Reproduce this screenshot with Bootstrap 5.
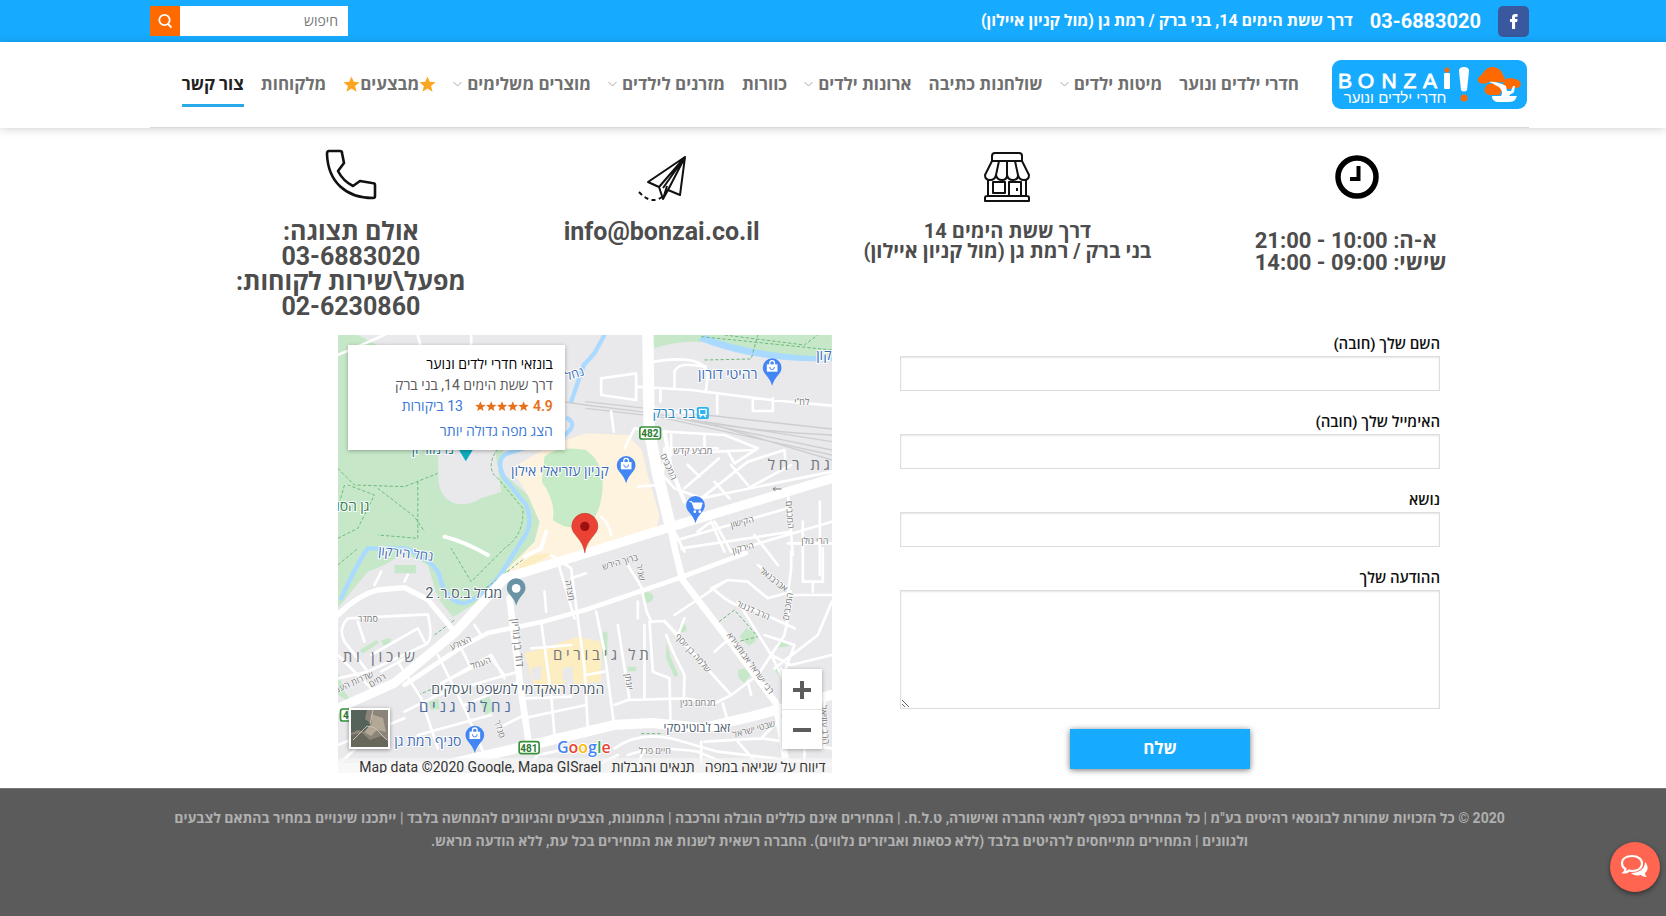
<!DOCTYPE html>
<html lang="he" dir="rtl">
<head>
<meta charset="utf-8">
<meta name="viewport" content="width=device-width, initial-scale=1">
<title>Bonzai - צור קשר</title>
<link href="https://cdn.jsdelivr.net/npm/bootstrap@5.3.0/dist/css/bootstrap.min.css" rel="stylesheet">
<style>
  :root { --brand: #16abff; --accent: #ff6a00; --ink: #4a4a4a; }
  body { font-family: Roboto, "Open Sans", "Liberation Sans", sans-serif; color: var(--ink); background: #fff; min-height: 100vh; }
  a { color: inherit; text-decoration: none; }
  .band { padding-left: 13px; }
  .shell { max-width: 1379px; margin-inline: auto; }

  .topbar { background: var(--brand); color: #fff; font-weight: 700; }
  .topbar .shell { height: 42px; }
  .top-links { gap: 17px; }
  .phone { font-size: 20px; }
  .address { font-size: 16px; }
  .fb { width: 31px; height: 31px; background: #3a589d; border-radius: 5px; }
  .search-box { width: 198px; height: 30px; }
  .search-box .form-control { border: 0; border-radius: 0; font-size: 14px; padding: 0 10px; box-shadow: none; color: #777; }
  .search-box .form-control::placeholder { color: #777; }
  .search-box .btn { width: 30px; padding: 0; border: 0; border-radius: 0; background: var(--accent); flex: none; }
  .search-box svg { display: block; margin: auto; }

  .site-head { box-shadow: 0 1px 9px rgba(0,0,0,.18); background: #fff; position: relative; }
  .site-head .shell { height: 86px; padding-right: 2px; border-bottom: 1px solid #d9d9d9; }
  .main-nav { font-size: 17px; font-weight: 700; color: #707070; gap: 17px; padding-right: 33px; white-space: nowrap; }
  .main-nav a { line-height: 24px; padding: 10px 0 8px; border-bottom: 3px solid transparent; display: flex; align-items: center; gap: 5px; }
  .main-nav a.current { color: #222; border-color: #29a9e8; }
  .main-nav a.deal { gap: 0; color: #707070; }
  .deal svg { color: #fca521; }

  .facts { display: grid; grid-template-columns: 345fr 354fr 338fr 284fr 59fr; text-align: center; height: 207px; padding-top: 21px; font-weight: 700; color: #4d4d4d; }
  .facts svg { display: block; margin: 0 auto; height: 54px; }
  .fact-md { font-size: 20px; line-height: 20px; margin-top: 18px; white-space: nowrap; }
  .fact-hours { font-size: 22px; line-height: 22px; margin-top: 27px; padding-right: 12px; display: inline-block; text-align: left; }
  .fact-lg { font-size: 25px; line-height: 25px; margin-top: 16px; white-space: nowrap; }

  .contact { display: grid; grid-template-columns: 89fr 540fr 69fr 494fr 188fr; padding-bottom: 15px; }
  .contact form { grid-column: 2; }
  .contact label { display: block; font-size: 15px; font-weight: 600; line-height: 19px; color: #111; margin-bottom: 2px; }
  .contact .form-control { border: 1px solid #ddd; border-radius: 0; box-shadow: inset 0 1px 2px rgba(0,0,0,.1); height: 35px; margin-bottom: 22px; }
  .contact textarea.form-control { height: 119px; margin-bottom: 20px; }
  .send { display: block; width: 180px; height: 40px; margin: 0 190px 0 0; border: 0; border-radius: 0; background: var(--brand); color: #fff; font-size: 17px; font-weight: 700; padding: 0; box-shadow: 0 1px 6px rgba(0,0,0,.55); }

  .map { grid-column: 4; position: relative; height: 438px; overflow: hidden; background: #e9e9ec; }
  .map-art { width: 100%; height: 100%; display: block; }
  .map-art text { direction: rtl; text-anchor: middle; }
  .place-card { position: absolute; top: 10px; left: 10px; width: 217px; height: 105px; padding: 9px 12px; background: #fff; box-shadow: 0 1px 4px rgba(0,0,0,.3); font-size: 14px; line-height: 21px; color: #5b5b5b; }
  .place-card .title { color: #000; font-weight: 500; }
  .place-card a { color: #3a78d8; }
  .place-card .score, .place-card svg { color: #e7711b; font-weight: 600; }
  .zoom-box { position: absolute; right: 10px; bottom: 24px; width: 40px; background: #fff; box-shadow: 0 1px 4px rgba(0,0,0,.3); }
  .zoom-box button { display: block; width: 40px; height: 40px; border: 0; background: none; padding: 0; }
  .zoom-box button + button { border-top: 1px solid #e6e6e6; }
  .sat { position: absolute; left: 11px; bottom: 24px; width: 41px; height: 41px; border: 2px solid #fff; padding: 0; box-shadow: 0 1px 4px rgba(0,0,0,.4); }
  .sat svg { display: block; }
  .map-credit { position: absolute; left: 0; right: 0; bottom: -3px; padding: 0 6px; font-size: 14px; line-height: 18px; color: #333; background: rgba(245,245,245,.7); gap: 10px; white-space: nowrap; }

  .site-foot { background: #5b5b5b; color: #b0b0b0; font-size: 14px; font-weight: 700; line-height: 23px; text-align: center; padding-top: 18px; padding-bottom: 63px; border-top: 1px solid #777; }
  .chat { position: fixed; right: 6px; bottom: 24px; width: 50px; height: 50px; border: 0; border-radius: 50%; background: #ff6550; padding: 0; box-shadow: 0 2px 5px rgba(0,0,0,.45); }
</style>
</head>
<body>

<div class="topbar band">
  <div class="shell d-flex align-items-center justify-content-between">
    <div class="top-links d-flex align-items-center">
      <a class="fb d-flex align-items-center justify-content-center" href="#" aria-label="Facebook">
        <svg width="12" height="16" viewBox="0 0 12 16"><path fill="#fff" d="M4 16V9H2V6h2V4.200C4 2 5.200 1 7.200 1H9.500v2.700H8C7.300 3.700 7.100 4 7.100 4.600V6h2.400L9.200 9H7.100v7z"/></svg>
      </a>
      <a class="phone" href="tel:036883020">03-6883020</a>
      <span class="address">דרך ששת הימים 14, בני ברק / רמת גן (מול קניון איילון)</span>
    </div>
    <form class="search-box d-flex" role="search">
      <input class="form-control" type="search" placeholder="חיפוש" aria-label="חיפוש">
      <button class="btn" type="button" aria-label="חפש"><svg width="16" height="16" viewBox="0 0 16 16" fill="none" stroke="#fff" stroke-width="1.800"><circle cx="7.500" cy="7" r="5.200"/><path d="M11 11l3.500 3.500"/></svg></button>
    </form>
  </div>
</div>

<header class="site-head band">
  <div class="shell d-flex align-items-center">
    <a href="#" aria-label="Bonzai" class="flex-shrink-0">
      <svg width="195" height="49" viewBox="0 0 195 49" class="d-block" direction="ltr">
        <rect width="195" height="49" rx="9" fill="#16abff"/>
        <g fill="#fff" font-family="Liberation Sans, sans-serif">
          <text y="28" font-size="21" stroke="#fff" stroke-width="0.800" text-anchor="middle"><tspan x="13">B</tspan><tspan x="34">O</tspan><tspan x="57">N</tspan><tspan x="78">Z</tspan><tspan x="98">A</tspan></text>
          <text x="63" y="43" font-size="15" direction="rtl" text-anchor="middle">חדרי ילדים ונוער</text>
        </g>
        <rect x="112" y="13" width="6" height="16" rx="1" fill="#fff"/><circle cx="115" cy="10" r="2.500" fill="#ff6a00"/>
        <path d="M127 11q0-4 5-4t5 4l-2 19q-3 3-6 0z" fill="#fff"/><circle cx="132" cy="38" r="3.500" fill="#ff6a00"/>
        <path d="M146 21c-1-4 3-5 5-8 3-5 7-6 10-6 5 0 9 4 10 8 2 2 3 6 0 7-5 1-9-1-14 0-3 2-9 3-11-1zM155 25c4-2 9-2 12 0 3 2 3 8 0 10h-9c-6 0-7-7-3-10zM172 21c2-3 7-4 10-2 6 0 8 5 6 7-1 3-7 1-10 3-4 1-9-3-6-8z" fill="#ff6a00"/>
        <path d="M157 22c5-1 9 1 13 2l4 2 1 5 4 0 2-5h2l-1 6c-2 2-4 2-5 4h8l-1 2c-1 3-4 4-7 4h-10c-4 0-7-2-7-6h9c2-3 1-6-2-9l-4-2c-2-2-4-2-6-3z" fill="#fff"/>
      </svg>
    </a>
    <nav class="main-nav d-flex">
      <a href="#">חדרי ילדים ונוער</a>
      <a href="#">מיטות ילדים <svg width="9" height="6" viewBox="0 0 9 6"><path d="M.5 1l4 4 4-4" fill="none" stroke="#aaa"/></svg></a>
      <a href="#">שולחנות כתיבה</a>
      <a href="#">ארונות ילדים <svg width="9" height="6" viewBox="0 0 9 6"><path d="M.5 1l4 4 4-4" fill="none" stroke="#aaa"/></svg></a>
      <a href="#">כוורות</a>
      <a href="#">מזרנים לילדים <svg width="9" height="6" viewBox="0 0 9 6"><path d="M.5 1l4 4 4-4" fill="none" stroke="#aaa"/></svg></a>
      <a href="#">מוצרים משלימים <svg width="9" height="6" viewBox="0 0 9 6"><path d="M.5 1l4 4 4-4" fill="none" stroke="#aaa"/></svg></a>
      <a href="#" class="deal"><svg width="17" height="17" viewBox="0 0 20 20"><path id="star" fill="currentColor" d="M10 .5l2.600 6.300 6.900.5-5.300 4.400 1.700 6.700L10 14.800l-5.900 3.600 1.700-6.700L.5 7.300l6.900-.5z"/></svg>מבצעים<svg width="17" height="17" viewBox="0 0 20 20"><use href="#star"/></svg></a>
      <a href="#">מלקוחות</a>
      <a href="#" class="current">צור קשר</a>
    </nav>
  </div>
</header>

<main class="band">
  <section class="shell facts">
    <div>
      <svg width="54" height="54" viewBox="0 0 54 54"><circle cx="27" cy="28" r="19" fill="#fff" stroke="#000" stroke-width="5.500"/><path d="M28.500 17v13H20" fill="none" stroke="#000" stroke-width="4"/></svg>
      <div class="fact-hours">א-ה: 10:00 - 21:00<br>שישי: 09:00 - 14:00</div>
    </div>
    <div>
      <svg width="54" height="54" viewBox="0 0 54 54" fill="none" stroke="#111" stroke-width="2" stroke-linejoin="round">
        <path d="M12 12V7q0-3 3-3h24q3 0 3 3v5zM12 12L5 26q0 5 5 5t6-5q1 5 6 5t5-5q1 5 6 5t5-5q1 5 6 5t5-5l-7-14M19 12l-3 14M27 12v14M35 12l3 14M8 31v16M46 31v16M13 33h12v11H13zM29 47V33h12v14M7 47h40q2 0 2 2v3H5v-3q0-2 2-2z"/><path d="M37 39v3"/>
      </svg>
      <div class="fact-md">דרך ששת הימים 14<br>בני ברק / רמת גן (מול קניון איילון)</div>
    </div>
    <div>
      <svg width="54" height="54" viewBox="0 0 54 54" fill="none" stroke="#111" stroke-width="2" stroke-linejoin="round">
        <path d="M50 8L13 33l11 5zM50 8L24 38l4 12 5-9zM50 8L33 41l12 5zM28 50L32 37M50 8L28 39"/><path stroke-dasharray="4 3.500" d="M4 43q12 13 23 5"/>
      </svg>
      <div class="fact-lg"><a href="mailto:info@bonzai.co.il">info@bonzai.co.il</a></div>
    </div>
    <div>
      <svg width="54" height="54" viewBox="0 0 54 54" fill="none" stroke="#111" stroke-width="2.600" stroke-linejoin="round">
        <path d="M5 2h11q2 0 2 2l2 10-6 8q5 10 15 15l7-5 12 2q3 0 3 2v11q0 2-2 2C22 49 4 33 3 5q0-3 2-3z"/>
      </svg>
      <div class="fact-lg">אולם תצוגה:<br>03-6883020<br>מפעל\שירות לקוחות:<br>02-6230860</div>
    </div>
  </section>

  <section class="shell contact">
    <form>
      <label for="f-name">השם שלך (חובה)</label>
      <input class="form-control" id="f-name" type="text">
      <label for="f-mail">האימייל שלך (חובה)</label>
      <input class="form-control" id="f-mail" type="email">
      <label for="f-subj">נושא</label>
      <input class="form-control" id="f-subj" type="text">
      <label for="f-msg">ההודעה שלך</label>
      <textarea class="form-control" id="f-msg"></textarea>
      <button class="btn send" type="button">שלח</button>
    </form>

    <div class="map">
      <svg class="map-art" viewBox="0 0 494 438" preserveAspectRatio="xMidYMid slice" role="img" aria-label="מפה">
        <g transform="scale(.333333)" fill="none" stroke-linecap="round" stroke-linejoin="round">
          <rect width="1490" height="1320" fill="#e9e9ec"/>
          <!-- parks -->
          <path fill="#c6e8c8" d="M0 0H60L120 30 500 340 480 400 570 480 610 570 580 650 520 700 470 770 345 846 300 790 270 690 200 655 140 690 90 710 40 770 0 820z"/>
          <path fill="#e9e9ec" d="M300 330H470L490 470 430 490Q390 515 350 505 310 490 302 440zM40 800L110 720 200 680 270 700 300 790 340 850 200 800z"/>
          <path fill="#c6e8c8" d="M945 0H1482V75Q1330 80 1200 40 1060 0 950 40zM170 690h65v25h-65zM0 1010l20 60 30 40-50-30z"/>
          <path fill="#aadaff" stroke="none" d="M1100 0Q1250 60 1482 65V78Q1250 85 1080 15z"/>
          <g fill="#c6e8c8">
            <circle cx="930" cy="787" r="16"/><circle cx="1034" cy="880" r="12"/><path d="M795 890h14v70l-8 30-8-30zM985 920l15 50 22 50-12 6-25-56zM1205 905l20-25 28 15v25l-20 12zM1200 1005l20-5 18 20-18 24-18-15zM1315 925l20-10 20 18-38 6zM1315 990l20 15v30l-22-26zM66 945l50-30 8 8-50 34zM130 915l28-6v15l-22 8zM425 1095l30-10 12 40-24 14zM272 1100l30-8 4 30-26 3zM870 995h25v14h-25z"/>
          </g>
          <!-- commercial blocks -->
          <path fill="#fdf3de" d="M520 400L640 330 744 295 870 300 912 345 932 430 965 540 958 575 740 650 545 725 505 705 590 620 605 560 570 480z"/>
          <path fill="#c6ebc6" d="M620 365Q660 330 744 345 795 380 795 450 790 540 750 570 690 590 645 555 655 500 612 440z"/>
          <path fill="#fdeec2" d="M560 955l70-20 90-30 70 15v120l-80 8-10-40-40 70-70-20zM545 690l40-30 60-6-100 60z"/>
          <path fill="#e9e9ec" d="M580 1000l30-8v40l-25 4zM675 1000l30-6v40l-30 4z"/>
          <!-- water -->
          <path stroke="#aadaff" stroke-width="13" d="M800 0L770 55 738 90 700 200M690 250Q720 270 680 300L510 355Q470 370 500 430L565 510Q590 570 550 620L500 700Q450 780 380 805 320 800 305 720 280 670 200 640L90 640Q60 680 10 790"/>
          <!-- trails -->
          <g stroke="#6dba7c" stroke-width="3" stroke-dasharray="10 6" stroke-linecap="butt">
            <path d="M0 400L50 450 200 455 300 415M240 440V610L120 600M120 460L230 545 260 590M0 610L60 580 110 480 30 450M20 450L0 520M480 340Q440 400 480 430L555 520Q560 600 500 640L400 740 340 640M0 690L60 640M580 655L430 770M1100 75L1240 72 1260 0M1090 5L1482 45M1160 0L1400 30 1440 0M1144 860L1190 825 1260 905 1200 920M910 1196h65M240 1080l60-25M290 900l60-45"/>
          </g>
          <!-- railway -->
          <g stroke="#cdced0" stroke-width="4">
            <path d="M540 180L744 210 950 235 1482 345M744 220L960 245 1482 360M1060 255Q1250 290 1482 300M1100 260L1482 320M744 200L1482 282M1130 270L1482 375"/>
          </g>
          <!-- side streets -->
          <g stroke="#fff" stroke-width="8">
            <path d="M790 130L895 115V195L790 180zM895 155L1060 165 1300 195 1482 212M950 80Q1100 55 1110 120L1104 170M1010 160V110Q1020 85 1060 90L1104 95M1138 175V235M968 165V200M1245 190V228H1305V190M0 60L140 0M240 0L260 80M400 0V60M820 230L828 290M945 220Q1050 240 1104 228"/>
            <path d="M980 290L1160 300 1260 340 1190 385 1170 350M1000 340L1140 340M1100 300V340M1000 300V360M1010 355L1250 345M1180 390L1230 450M1040 460L1144 370M1090 490L1230 380 1340 345 1342 370M1050 390L1085 425M1130 440L1175 490M1230 460L1360 390M980 340L975 420 1010 460 1090 490 1482 410M860 340L890 280 940 290M900 455L960 450 M790 545Q815 570 820 600"/>
            <path d="M1000 620L1350 520M1030 640L1360 590M1080 590L1120 560 1160 650M1130 560L1180 650 1482 560M1350 470L1365 660M1395 560V654M1446 500V720M1350 625H1482M1250 600L1320 690M1000 570L1040 650"/>
            <path d="M1120 760L1170 735 1230 740 1290 790 1360 770M1130 765Q1190 820 1240 820L1370 880M1360 650V700L1350 780 1482 780M1395 650V740H1455V640M1425 740V770M1260 690L1350 760M1160 740L1010 840M1200 800L1300 960 1360 990 1482 960M1482 800L1440 900 1310 1000M1180 1080L1260 1020 1340 900 1360 800M980 860L1180 1080M870 690L910 755 925 825 940 860 980 858 1020 900 1040 850M900 800V850M1280 900L1370 930 1340 1010M1300 960L1340 1040M1130 950L1170 915M1230 1040L1240 1080"/>
            <path d="M920 870V1090M935 860L945 1010 995 1030 998 1160M985 900L1010 960 1040 1020 1038 1085M840 870L875 1095M830 1110L870 1095 1040 1090 1130 1105 1180 1080M1155 1105L1170 1160M775 830L800 950 830 1180M744 1020L800 1010M640 660L700 700 740 1000 750 1180M620 770L625 830M660 680L710 850M700 730L744 715"/>
            <path d="M610 860L640 1080 650 1200M580 940L700 930M560 1090L700 1085M555 1150L744 1110M30 850L270 838M30 850Q0 880 20 920L90 1010M60 860L80 920M270 838Q290 920 260 930L90 1010 0 1030M100 960L240 880 260 920M130 1010L220 960M0 960L100 1060M180 980L250 1090 300 1240M300 960L380 1120 440 1260M370 940L400 1000 310 1045M310 1045L460 960 500 1030M400 1000L460 970 500 1020M410 870L430 900M200 1130L300 1080 540 1010M0 1230L200 1150M240 1200L460 1140 M0 1290L120 1180M110 750L130 710M200 740L210 720M380 1110L545 1040M480 1180L560 1140M160 1050L230 1000"/>
            <path d="M830 1240Q900 1190 1000 1210L1140 1250 1482 1290M870 1260Q950 1230 1080 1250L1200 1300M1090 1220V1280M1100 1220L1270 1210 1320 1160M1200 1220L1280 1310M1270 1210L1482 1240M920 1240L890 1314M760 1300L840 1260M560 1314L600 1260 744 1230M1400 1080V1290M1460 1100V1230M1340 1060L1330 1000"/>
          </g>
          <!-- avenues -->
          <g stroke="#fff">
            <path stroke-width="34" d="M930 -10L934 285 959 415 994 560"/>
            <path stroke-width="20" d="M994 560L1014 654 1034 734 1164 904 1314 1104 1350 1314"/>
            <path stroke-width="28" d="M1500 425L1000 575 744 655 500 730 350 894 170 1044 -10 1125"/>
            <path stroke-width="14" d="M1224 654L1024 729 744 824 620 859 450 894 380 930 200 1050"/>
            <path stroke-width="16" d="M0 840Q60 780 120 765L200 758 270 794 350 890"/>
            <path stroke-width="20" d="M515 790L545 1034 575 1240"/>
            <path stroke-width="30" d="M-10 1300L300 1295 600 1225 834 1169 944 1164 1094 1179 1244 1144 1500 1075"/>
            <path stroke-width="12" d="M1040 500L1000 400 980 290M320 605Q380 620 450 660M625 590L610 640 560 665"/>
          </g>
          <!-- route shields -->
          <g fill="#fff" stroke="#36933a" stroke-width="5"><rect x="906" y="276" width="62" height="36" rx="7"/><rect x="544" y="1220" width="60" height="36" rx="7"/><rect x="8" y="1122" width="62" height="36" rx="7"/></g>
          <rect x="1077" y="216" width="36" height="36" rx="5" fill="#2db5f0"/><path stroke="#fff" stroke-width="4" d="M1085 223h20v16h-20zM1087 245l4-4M1103 245l-4-4"/>
          <!-- pins -->
          <path fill="#0dadbd" d="M362 343h44l-22 36z"/>
          <defs><path id="pin" d="M0 40C-8 10-28 6-28-14a28 28 0 0156 0C28 6 8 10 0 40z"/></defs>
          <g fill="#4285f4"><use href="#pin" x="1303" y="112"/><use href="#pin" x="865" y="405"/><use href="#pin" x="1073" y="525"/><use href="#pin" x="411" y="1214"/></g>
          <use href="#pin" x="535" y="772" fill="#6b93a6"/><circle cx="535" cy="760" r="13" fill="#fff"/>
          <g fill="#fff"><path id="bag" d="M1287 88h32v22h-32z"/><use href="#bag" x="-438" y="293"/><use href="#bag" x="-892" y="1102"/></g>
          <g stroke="#fff" stroke-width="4"><path id="grip" d="M1296 88v-4a7 7 0 0114 0v4"/><use href="#grip" x="-438" y="293"/><use href="#grip" x="-892" y="1102"/></g>
          <g stroke="#4285f4" stroke-width="3"><path id="smile" d="M1296 97a7 7 0 0014 0"/><use href="#smile" x="-438" y="293"/><use href="#smile" x="-892" y="1102"/></g>
          <path fill="#fff" stroke="#fff" stroke-width="3" d="M1056 500h6l8 22h18l5-18h-28"/><g fill="#fff"><circle cx="1071" cy="530" r="4"/><circle cx="1086" cy="530" r="4"/></g>
          <path fill="#ea4335" stroke="#c5352b" stroke-width="2" d="M741 652C735 610 702 600 702 574a39 39 0 0178 0C780 600 747 610 741 652z"/><circle cx="741" cy="574" r="14" fill="#9c1010"/>
          <path stroke="#777" stroke-width="3" d="M1330 462h-24l6-5m-6 5l6 5"/>
        </g>
        <g font-size="14" fill="#3d6cb5" stroke="#fff" stroke-width="2" paint-order="stroke">
          <text x="390" y="44">רהיטי דורון</text><text x="222" y="141">קניון עזריאלי אילון</text><text x="336" y="83" fill="#2a87c5">בני ברק</text><text x="90" y="411">סניף רמת גן</text><text x="486" y="25">קון</text>
          <text x="95" y="119" fill="#1d7d8c">נו מוריון</text>
          <g fill="#4a5a6b"><text x="126" y="263">מגדל ב.ס.ר. 2</text><text x="180" y="359">המרכז האקדמי למשפט ועסקים</text><text x="359" y="397" font-size="12">זאב ז'בוטינסקי</text></g>
          <text x="15" y="176" fill="#2e7d4c">גן הסו</text>
          <text x="237" y="43" font-size="12" transform="rotate(-18 237 39)">נחל</text><text x="68" y="223" font-size="13" transform="rotate(6 68 219)">נחל הירקון</text>
        </g>
        <g font-size="15" fill="#71767c"><text x="461" y="135">ג ת&#160;&#160;&#160;ר ח ל</text><text x="263" y="325">ת ל&#160;&#160;&#160;ג י ב ו ר י ם</text><text x="127" y="377" fill="#4d6b9c">נ ח ל ת&#160;&#160;&#160;ג נ י ם</text><text x="41" y="327">ש י כ ו ן&#160;&#160;&#160;ו ת</text></g>
        <g font-size="9" fill="#777" stroke="#fff" stroke-width="1" paint-order="stroke">
          <text x="464" y="70">לח"י</text><text x="355" y="119">מבצע קדש</text><text transform="translate(328 133) rotate(65)">המכבים</text>
          <text transform="translate(405 190) rotate(-14)">הקישון</text><text transform="translate(406 216) rotate(-14)">הירקון</text><text x="477" y="209">הרי גולן</text><text transform="translate(449 180) rotate(86)">המכבים</text>
          <text transform="translate(283 230) rotate(-16)">ברוך הירש</text><text transform="translate(300 238) rotate(78)">שניר</text><text transform="translate(434 247) rotate(38)">אברבנאל</text><text transform="translate(414 278) rotate(24)">הרב דנגור</text><text transform="translate(453 272) rotate(-80)">המכבים</text>
          <text transform="translate(353 320) rotate(48)">שלמה בן יוסף</text><text transform="translate(410 330) rotate(54)">רבי ישראל אבוחצירא</text><text x="360" y="371">מנחם בגין</text><text transform="translate(417 397) rotate(-16)">שבטי ישראל</text><text x="317" y="419">חיים פרל</text>
          <text transform="translate(288 347) rotate(82)">יונתן</text><text transform="translate(229 256) rotate(78)">מצדה</text><text transform="translate(176 308) rotate(84)" font-size="11">דוד בן גוריון</text><text x="30" y="287">סמדר</text><text transform="translate(124 311) rotate(-25)">הצולע</text><text transform="translate(144 331) rotate(-20)">העמל</text><text transform="translate(17 350) rotate(-24)">שדרות העם</text><text transform="translate(41 348) rotate(-30)">רמים</text><text transform="translate(159 395) rotate(72)">סנדר</text><text transform="translate(484 390) rotate(86)">הרב עוזיאל</text>
        </g>
        <g font-size="10" font-weight="700" fill="#2c7a31"><text x="312" y="102">482</text><text x="191" y="417">481</text><text x="8" y="384">4</text></g>
        <text x="246" y="418" font-family="Open Sans, sans-serif" font-size="16" font-weight="600" stroke="#fff" stroke-width="2" paint-order="stroke" style="direction:ltr"><tspan fill="#4285f4">G</tspan><tspan fill="#ea4335">o</tspan><tspan fill="#fbbc05">o</tspan><tspan fill="#4285f4">g</tspan><tspan fill="#34a853">l</tspan><tspan fill="#ea4335">e</tspan></text>
      </svg>
      <div class="place-card">
        <div class="title">בונזאי חדרי ילדים ונוער</div>
        <div>דרך ששת הימים 14, בני ברק</div>
        <div class="d-flex align-items-center"><span class="score">4.9</span>
          <svg class="mx-1" width="54" height="11" viewBox="0 0 100 20"><use href="#star"/><use href="#star" x="20"/><use href="#star" x="40"/><use href="#star" x="60"/><use href="#star" x="80"/></svg>
          <a href="#" class="pe-2">13 ביקורות</a></div>
        <a href="#" class="d-block pt-1">הצג מפה גדולה יותר</a>
      </div>
      <button class="sat" type="button" aria-label="תצוגת לוויין"><svg width="37" height="37" viewBox="0 0 37 37"><rect width="37" height="37" fill="#8b8579"/><path fill="#56635a" d="M0 0h16l-2 9 8 6-6 8-9-3-7 3z"/><path fill="#b3a796" d="M20 4l12 4 3 14-9-2-6 6-7-4 8-9z"/><path fill="#68675c" d="M0 25l11-2 8 7 11-4 7 5v6H0z"/><path stroke="#c9c2b5" stroke-width="1" d="M2 30l14-14 8 2 12 12M22 0l-3 14" fill="none"/></svg></button>
      <div class="zoom-box">
        <button type="button" aria-label="הגדל"><svg width="18" height="18" viewBox="0 0 18 18"><path d="M9 0v18M0 9h18" stroke="#5c5c5c" stroke-width="4"/></svg></button>
        <button type="button" aria-label="הקטן"><svg width="18" height="18" viewBox="0 0 18 18"><path d="M0 9h18" stroke="#5c5c5c" stroke-width="4"/></svg></button>
      </div>
      <div class="map-credit d-flex"><a href="#">דיווח על שגיאה במפה</a><a href="#">תנאים והגבלות</a><span dir="ltr">Map data ©2020 Google, Mapa GISrael</span></div>
    </div>
  </section>
</main>

<footer class="site-foot band">
  <div class="shell px-2">2020 © כל הזכויות שמורות לבונסאי רהיטים בע"מ | כל המחירים בכפוף לתנאי החברה ואישורה, ט.ל.ח. | המחירים אינם כוללים הובלה והרכבה | התמונות, הצבעים והגיוונים להמחשה בלבד | ייתכנו שינויים במחיר בהתאם לצבעים ולגוונים | המחירים מתייחסים לרהיטים בלבד (ללא כסאות ואביזרים נלווים). החברה רשאית לשנות את המחירים בכל עת, ללא הודעה מראש.</div>
</footer>

<button class="chat" type="button" aria-label="צ'אט">
  <svg width="30" height="26" viewBox="0 0 30 26"><path fill="#fff" d="M25 8c4 4 3 9 0 11 0 2 1 3 2 4-3 0-5-1-6-2-4 1-8 0-10-2 8 0 14-4 14-11z"/><path fill="#ff6550" stroke="#fff" stroke-width="2.200" d="M12 2c6 0 10 3 10 7.500S18 17 12 17c-1 0-2 0-3-.4C7.500 18 6 18.500 4 18.500c1-1 1.500-2 1.500-3.500C3.300 13.700 2 11.700 2 9.500 2 5 6 2 12 2z"/></svg>
</button>

<script src="https://cdn.jsdelivr.net/npm/bootstrap@5.3.0/dist/js/bootstrap.bundle.min.js"></script>
</body>
</html>
